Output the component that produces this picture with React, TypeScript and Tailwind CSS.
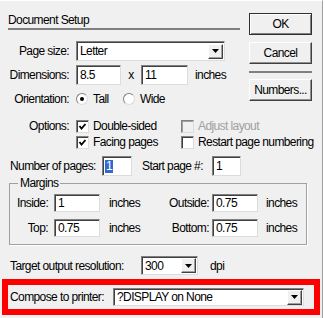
import type { ReactNode } from 'react'

const font = {
  fontFamily: '"Liberation Sans Narrow", "Arial Narrow", "Liberation Sans", Arial, sans-serif',
}

function Sunken({ className = '', children }: { className?: string; children?: ReactNode }) {
  return (
    <div
      className={[
        'flex shrink-0 items-center border border-t-[#808080] border-l-[#808080] border-b-[#dcdcdc] border-r-[#dcdcdc] bg-white',
        'shadow-[inset_1px_1px_0_#404040]',
        className,
      ].join(' ')}
    >
      {children}
    </div>
  )
}

function Field({ value, className = '' }: { value: string; className?: string }) {
  return (
    <Sunken className={className}>
      <span className="pl-[3px] leading-none">{value}</span>
    </Sunken>
  )
}

function Arrow() {
  return (
    <div className="flex h-[15px] w-[15px] items-center justify-center border border-t-white border-l-white border-b-[#404040] border-r-[#404040] bg-[#f0f0f0] shadow-[inset_-1px_-1px_0_#a0a0a0]">
      <svg width="7" height="4" viewBox="0 0 7 4">
        <polygon points="0,0 7,0 3.5,4" fill="#000" />
      </svg>
    </div>
  )
}

function Select({ value, className = '' }: { value: string; className?: string }) {
  return (
    <Sunken className={['justify-between pr-[1px]', className].join(' ')}>
      <span className="pl-[3px] leading-none">{value}</span>
      <Arrow />
    </Sunken>
  )
}

function Button({ label, primary = false }: { label: string; primary?: boolean }) {
  return (
    <div
      className={[
        'flex h-[22px] w-[63px] items-center justify-center bg-[#f0f0f0]',
        primary
          ? 'border border-[#303030] shadow-[inset_1px_1px_0_#ffffff,inset_-1px_-1px_0_#808080]'
          : 'border border-t-white border-l-white border-b-[#404040] border-r-[#404040] shadow-[inset_-1px_-1px_0_#909090]',
      ].join(' ')}
    >
      {label}
    </div>
  )
}

function Check({ checked, disabled = false }: { checked: boolean; disabled?: boolean }) {
  return (
    <div
      className={[
        'flex h-[13px] w-[13px] shrink-0 items-center justify-center border border-t-[#808080] border-l-[#808080] border-b-[#dcdcdc] border-r-[#dcdcdc]',
        disabled ? 'bg-[#f0f0f0] shadow-[inset_1px_1px_0_#a0a0a0]' : 'bg-white shadow-[inset_1px_1px_0_#404040]',
      ].join(' ')}
    >
      {checked && (
        <svg width="9" height="9" viewBox="0 0 9 9">
          <polyline points="1.5,4 3.5,6.5 7.5,2" fill="none" stroke="#000" strokeWidth="1.8" />
        </svg>
      )}
    </div>
  )
}

function Radio({ checked }: { checked: boolean }) {
  return (
    <div className="flex h-[12px] w-[12px] shrink-0 items-center justify-center rounded-full border border-t-[#808080] border-l-[#808080] border-b-[#dcdcdc] border-r-[#dcdcdc] bg-white">
      {checked && <div className="h-[4px] w-[4px] rounded-full bg-black" />}
    </div>
  )
}

function Label({ children, className = '' }: { children: ReactNode; className?: string }) {
  return <span className={['shrink-0 text-right', className].join(' ')}>{children}</span>
}

export default function App() {
  return (
    <div
      className="h-[318px] w-[325px] overflow-hidden whitespace-nowrap bg-white text-[12px] leading-[16px] tracking-[-0.6px] text-black"
      style={font}
    >
      <div className="h-[318px] w-[323px] border-t border-r border-t-white border-r-[#a0a0a0] bg-[#f0f0f0]">
        {/* Top: header + form on the left, buttons on the right */}
        <div className="flex">
          <div className="w-[240px] pl-2 pt-[11px]">
            <div className="h-[18px] border-b-2 border-[#808080]">Document Setup</div>

            <div className="mt-[11px] flex h-[20px] items-center">
              <Label className="w-[61px]">Page size:</Label>
              <Select value="Letter" className="ml-[7px] h-[20px] w-[149px]" />
            </div>

            <div className="mt-[4px] flex h-[20px] items-center">
              <Label className="w-[61px]">Dimensions:</Label>
              <Field value="8.5" className="ml-[7px] h-[20px] w-[45px]" />
              <span className="w-[20px] text-center">x</span>
              <Field value="11" className="h-[20px] w-[47px]" />
              <span className="ml-[7px]">inches</span>
            </div>

            <div className="mt-[4px] flex h-[20px] items-center">
              <Label className="w-[61px]">Orientation:</Label>
              <div className="ml-[7px] flex w-[47px] items-center">
                <Radio checked />
                <span className="ml-[5px]">Tall</span>
              </div>
              <div className="flex items-center">
                <Radio checked={false} />
                <span className="ml-[5px]">Wide</span>
              </div>
            </div>
          </div>

          <div className="ml-[9px] flex flex-col pt-[12px]">
            <Button label="OK" primary />
            <div className="mt-[7px]">
              <Button label="Cancel" />
            </div>
            <div className="mt-[7px] h-[2px] w-[63px] bg-[#808080]" />
            <div className="mt-[6px]">
              <Button label="Numbers..." />
            </div>
          </div>
        </div>

        {/* Options */}
        <div className="mt-[9px] flex pl-2">
          <Label className="w-[61px]">Options:</Label>
          <div className="ml-[7px] flex w-[105px] flex-col">
            <div className="flex h-[16px] items-center">
              <Check checked />
              <span className="ml-[4px]">Double-sided</span>
            </div>
            <div className="flex h-[16px] items-center">
              <Check checked />
              <span className="ml-[4px]">Facing pages</span>
            </div>
          </div>
          <div className="flex flex-col">
            <div className="flex h-[16px] items-center">
              <Check checked={false} disabled />
              <span className="ml-[4px] text-[#a0a0a0]">Adjust layout</span>
            </div>
            <div className="flex h-[16px] items-center">
              <Check checked={false} />
              <span className="ml-[4px]">Restart page numbering</span>
            </div>
          </div>
        </div>

        {/* Page counts */}
        <div className="mt-[6px] flex h-[20px] items-center pl-[10px]">
          <span className="w-[92px]">Number of pages:</span>
          <Sunken className="h-[20px] w-[30px]">
            <span className="ml-[2px] bg-[#3168d5] px-[1px] leading-[13px] text-white">1</span>
          </Sunken>
          <span className="ml-[10px] w-[70px]">Start page #:</span>
          <Field value="1" className="h-[20px] w-[29px]" />
        </div>

        {/* Margins */}
        <fieldset className="ml-[9px] mt-[-1px] w-[298px] border border-[#a0a0a0] pb-[7px] pl-[7px] shadow-[1px_1px_0_#ffffff]">
          <legend className="ml-[1px] px-[2px]">Margins</legend>
          <div className="mt-[3px] flex h-[18px] items-center">
            <Label className="w-[31px]">Inside:</Label>
            <Field value="1" className="ml-[6px] h-[18px] w-[46px]" />
            <span className="ml-[9px] w-[40px]">inches</span>
            <Label className="w-[60px]">Outside:</Label>
            <Field value="0.75" className="ml-[3px] h-[18px] w-[46px]" />
            <span className="ml-[8px]">inches</span>
          </div>
          <div className="mt-[7px] flex h-[18px] items-center">
            <Label className="w-[31px]">Top:</Label>
            <Field value="0.75" className="ml-[6px] h-[18px] w-[46px]" />
            <span className="ml-[9px] w-[40px]">inches</span>
            <Label className="w-[60px]">Bottom:</Label>
            <Field value="0.75" className="ml-[3px] h-[18px] w-[46px]" />
            <span className="ml-[8px]">inches</span>
          </div>
        </fieldset>

        {/* Resolution */}
        <div className="mt-[11px] flex h-[19px] items-center pl-[10px]">
          <span className="w-[131px]">Target output resolution:</span>
          <Select value="300" className="h-[19px] w-[57px]" />
          <span className="ml-[12px]">dpi</span>
        </div>

        {/* Compose to printer (highlighted) */}
        <div className="ml-[2px] mt-[4px] flex h-[36px] w-[318px] items-center border-[6px] border-[#ff0000] pl-[2px]">
          <span className="w-[103px]">Compose to printer:</span>
          <Select value="?DISPLAY on None" className="h-[18px] w-[191px]" />
        </div>
      </div>
    </div>
  )
}
